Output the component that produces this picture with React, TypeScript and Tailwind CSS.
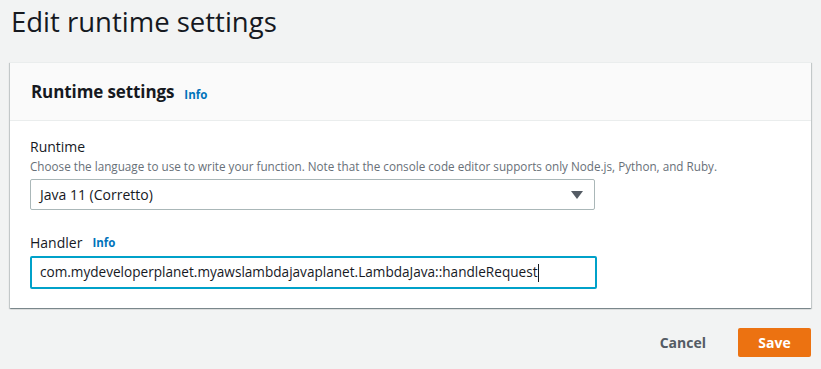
import React from "react";

export default function App() {
  const font = { fontFamily: '"Open Sans", "Noto Sans", Arial, sans-serif' };
  return (
    <div className="w-[821px] h-[369px] bg-[#f2f3f3] overflow-hidden text-[#16191f]" style={font}>
      <h1 className="pl-[11px] pt-[2px] h-[62px] text-[27.5px] leading-[40px] font-normal text-[#16191f]">
        Edit runtime settings
      </h1>
      <div className="mx-[10px] bg-white rounded-none shadow-[0_1px_1px_0_rgba(0,28,36,0.3),1px_1px_1px_0_rgba(0,28,36,0.15),-1px_1px_1px_0_rgba(0,28,36,0.15)] border-t border-[#eaeded]">
        <div className="h-[58px] bg-[#fafafa] border-b border-[#eaeded] flex items-center px-[21px]">
          <span className="text-[17px] tracking-[-0.1px] font-bold leading-[22px]">Runtime settings</span>
          <span className="ml-[10px] text-[11.5px] font-bold text-[#0073bb] leading-[22px] mt-[6px]">Info</span>
        </div>
        <div className="px-[20px] pt-[15px] pb-[19px]">
          <div className="text-[14px] leading-[22px]">Runtime</div>
          <div className="text-[11.7px] leading-[16px] text-[#687078]">
            Choose the language to use to write your function. Note that the console code editor supports only Node.js, Python, and Ruby.
          </div>
          <div className="mt-[5px] w-[565px] h-[31px] border border-[#aab7b8] rounded-[2px] flex items-center justify-between pl-[9px] pr-[11px]">
            <span className="text-[14px]">Java 11 (Corretto)</span>
            <svg width="12" height="8" viewBox="0 0 12 8">
              <polygon points="0,0 12,0 6,8" fill="#545b64" />
            </svg>
          </div>
          <div className="mt-[22px] flex items-center">
            <span className="text-[14px] leading-[22px]">Handler</span>
            <span className="ml-[10px] text-[11.5px] font-bold text-[#0073bb] leading-[22px]">Info</span>
          </div>
          <div className="mt-[2px] w-[567px] h-[33px] border-2 border-[#00a1c9] rounded-[2px] flex items-center pl-[8px]">
            <span className="text-[13.6px]">com.mydeveloperplanet.myawslambdajavaplanet.LambdaJava::handleRequest</span>
            <span className="w-px h-[18px] bg-[#16191f]" />
          </div>
        </div>
      </div>
      <div className="flex justify-end items-center mt-[20px] pr-[10px]">
        <span className="text-[14px] font-bold text-[#545b64] mr-[32px]">Cancel</span>
        <button className="w-[73px] h-[29px] bg-[#ec7211] rounded-[2px] text-white text-[14px] font-bold">Save</button>
      </div>
    </div>
  );
}
